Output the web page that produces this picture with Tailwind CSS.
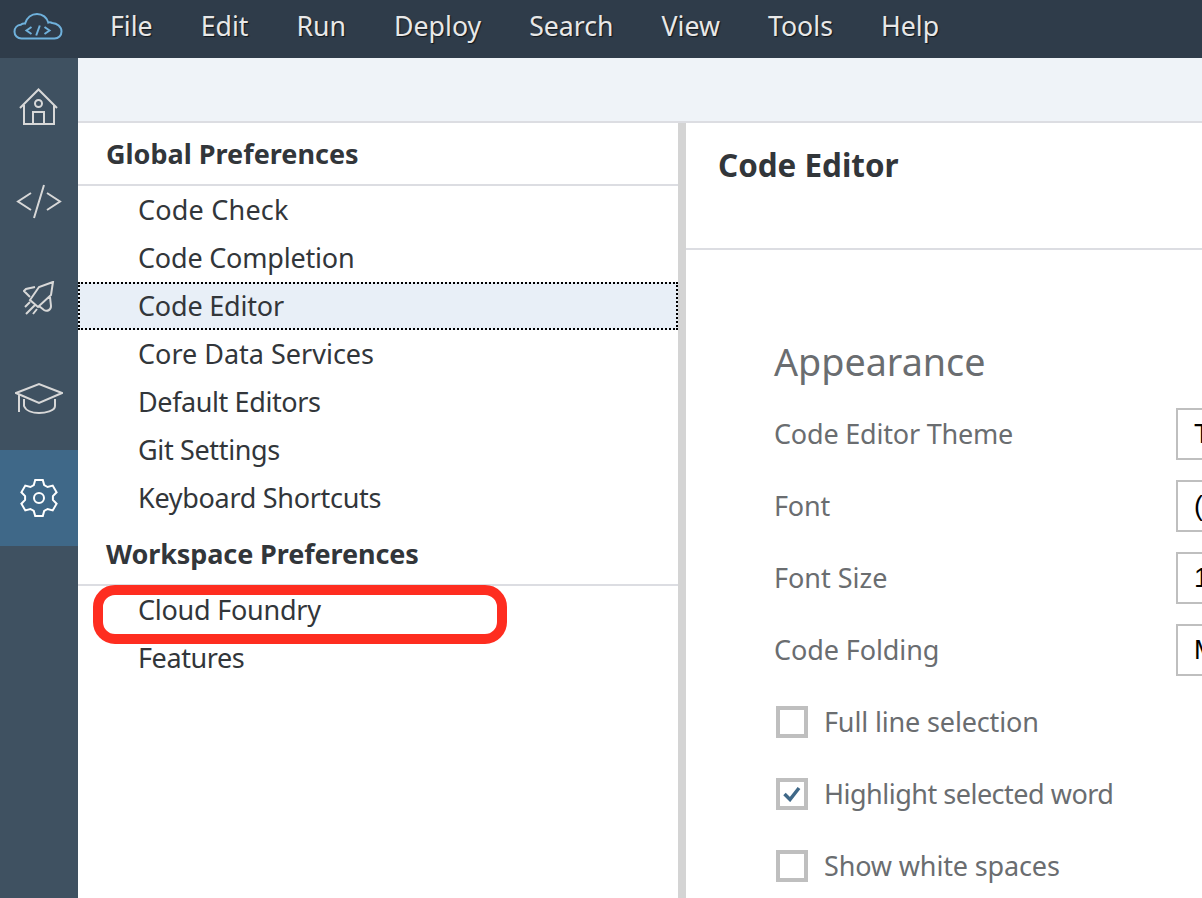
<!doctype html>
<html>
<head>
<meta charset="utf-8">
<script src="https://cdn.jsdelivr.net/npm/@tailwindcss/browser@4"></script>
</head>
<body class="overflow-hidden">
<div class="relative flex h-[898px] w-[1202px] flex-col overflow-hidden bg-white font-['Noto_Sans',sans-serif] text-[#32363a]">
  <header class="flex h-[58px] shrink-0 items-center bg-[#2f3c4a]">
    <div class="flex w-[78px] shrink-0 justify-center">
      <svg width="50" height="28" viewBox="0 0 50 28" fill="none" stroke="#6fb1dc" stroke-width="2" class="mb-[6px] mr-[2px]">
        <path d="M11 26.5H8.5C4.5 26.5 1.5 23.5 1.5 19.7C1.5 16 4.2 13.2 7.8 12.8C9 11.8 10.5 11.4 12 11.6C13.8 5.8 18.5 2 24 2C29.5 2 34 5.5 35.3 10.6C36.5 10.2 38 10.4 39.2 11C44 11.2 48.5 14.6 48.5 19.5C48.5 23.5 45.5 26.5 41.5 26.5Z"/>
        <path d="M18.5 15L13.5 18.5L18.5 22M31.5 15L36.5 18.5L31.5 22M26.8 13.5L23.2 23.5"/>
      </svg>
    </div>
    <nav class="flex items-center gap-[48px] pb-[6px] pl-[32px] text-[26.7px] text-[#e8e8e8] [text-shadow:1px_1px_1px_#10161c]">
      <span>File</span><span>Edit</span><span>Run</span><span>Deploy</span><span>Search</span><span>View</span><span>Tools</span><span>Help</span>
    </nav>
  </header>
  <div class="flex min-h-0 flex-1">
    <aside class="flex w-[78px] shrink-0 flex-col bg-[#3f5161]">
      <div class="flex h-[96px] items-center justify-center">
        <svg width="40" height="40" viewBox="0 0 40 40" fill="none" stroke="#d8d8d8" stroke-width="2">
          <path d="M1 22L19.5 3.5L38 22M5 19V38H35V19M14 38V26H25V38"/><circle cx="19.5" cy="17.5" r="3.5"/>
        </svg>
      </div>
      <div class="flex h-[96px] items-center justify-center">
        <svg width="46" height="36" viewBox="0 0 46 36" fill="none" stroke="#d8d8d8" stroke-width="2">
          <path d="M15 9L2 17.5L15 26M31 9L44 17.5L31 26M28 1L18 34"/>
        </svg>
      </div>
      <div class="flex h-[96px] items-center justify-center">
        <svg width="32" height="34" viewBox="0 0 32 34" fill="none" stroke="#d8d8d8" stroke-width="2">
          <path d="M30 1L16 6L7 19L15 26L28 14ZM12 6L3 8L1 10L7 16M27 16L28 25C28 29 24 31 21 29L16 25M2 26L7 21M3 33L12 24M10 33L14 28"/>
        </svg>
      </div>
      <div class="flex h-[104px] items-center justify-center">
        <svg width="48" height="32" viewBox="0 0 48 32" fill="none" stroke="#d8d8d8" stroke-width="2">
          <path d="M1 11L24 2L47 11L24 21ZM4 13V30M9 17V24C11 29 18 31 24 31C30 31 40 29 40 24V17"/>
        </svg>
      </div>
      <div class="flex h-[96px] items-center justify-center bg-[#3f6888]">
        <svg width="40" height="40" viewBox="0 0 40 40" fill="none" stroke="#ffffff" stroke-width="2">
          <path d="M16.2 1.9H23.8L25.2 7L28.6 9L33.7 7.6L37.6 14.3L33.9 18.1V21.9L37.6 25.7L33.7 32.4L28.6 31L25.2 33L23.8 38.1H16.2L14.8 33L11.4 31L6.3 32.4L2.4 25.7L6.1 21.9V18.1L2.4 14.3L6.3 7.6L11.4 9L14.8 7Z"/><circle cx="20" cy="20" r="5"/>
        </svg>
      </div>
    </aside>
    <main class="flex min-w-0 flex-1 flex-col">
      <div class="h-[65px] shrink-0 border-b-2 border-[#dcdde2] bg-[#eff3f8]"></div>
      <div class="flex min-h-0 flex-1">
        <section class="w-[600px] shrink-0 text-[27px]">
          <h2 class="flex h-[63px] items-center border-b-2 border-[#dcdde2] pt-[2px] pl-[28px] font-bold">Global Preferences</h2>
          <ul>
            <li class="flex h-[48px] items-center pl-[60px] tracking-[0.2px]">Code Check</li>
            <li class="flex h-[48px] items-center pl-[60px] tracking-[-0.2px]">Code Completion</li>
            <li class="flex h-[48px] items-center border-2 border-dotted border-black bg-[#e8eff7] pl-[58px] tracking-[-0.2px]">Code Editor</li>
            <li class="flex h-[48px] items-center pl-[60px]">Core Data Services</li>
            <li class="flex h-[48px] items-center pl-[60px] tracking-[-0.4px]">Default Editors</li>
            <li class="flex h-[48px] items-center pl-[60px] tracking-[-0.35px]">Git Settings</li>
            <li class="flex h-[48px] items-center pl-[60px] tracking-[-0.3px]">Keyboard Shortcuts</li>
          </ul>
          <h2 class="flex h-[64px] items-center border-b-2 border-[#dcdde2] pt-[2px] pl-[28px] font-bold tracking-[-0.1px]">Workspace Preferences</h2>
          <ul>
            <li class="flex h-[48px] items-center pl-[60px] tracking-[-0.25px]">Cloud Foundry</li>
            <li class="flex h-[48px] items-center pl-[60px] tracking-[-0.4px]">Features</li>
          </ul>
        </section>
        <div class="w-[8px] shrink-0 bg-[#d4d4d4]"></div>
        <section class="min-w-0 flex-1">
          <h1 class="flex h-[127px] items-start border-b-2 border-[#dcdde2] pl-[32px] pt-[18px] text-[31.4px] font-bold">Code Editor</h1>
          <div class="pl-[88px] text-[27px] text-[#6a6d70]">
            <h3 class="flex h-[137px] items-end text-[37.7px] leading-[50px]">Appearance</h3>
            <div class="mt-[21px] flex flex-col gap-[20px]">
              <div class="flex h-[52px] items-center"><span class="w-[402px] shrink-0 tracking-[-0.2px]">Code Editor Theme</span><span class="flex h-[52px] w-[80px] shrink-0 items-center border-2 border-[#bfbfbf] pl-[16px] font-['Liberation_Sans',sans-serif] text-black">T</span></div>
              <div class="flex h-[52px] items-center"><span class="w-[402px] shrink-0 tracking-[-0.2px]">Font</span><span class="flex h-[52px] w-[80px] shrink-0 items-center border-2 border-[#bfbfbf] pl-[16px] font-['Liberation_Sans',sans-serif] text-black">(</span></div>
              <div class="flex h-[52px] items-center"><span class="w-[402px] shrink-0">Font Size</span><span class="flex h-[52px] w-[80px] shrink-0 items-center border-2 border-[#bfbfbf] pl-[16px] font-['Liberation_Sans',sans-serif] text-black">1</span></div>
              <div class="flex h-[52px] items-center"><span class="w-[402px] shrink-0 tracking-[-0.1px]">Code Folding</span><span class="flex h-[52px] w-[80px] shrink-0 items-center border-2 border-[#bfbfbf] pl-[16px] font-['Liberation_Sans',sans-serif] text-black">M</span></div>
              <div class="flex h-[52px] items-center pl-[2px] tracking-[-0.15px]"><span class="mr-[16px] h-[32px] w-[32px] shrink-0 border-4 border-[#bfbfbf]"></span>Full line selection</div>
              <div class="flex h-[52px] items-center pl-[2px] tracking-[-0.5px]"><span class="mr-[16px] flex h-[32px] w-[32px] shrink-0 items-center justify-center border-4 border-[#bfbfbf]"><svg width="18" height="16" viewBox="0 0 18 16" fill="none" stroke="#3f6888" stroke-width="3.5"><path d="M1.5 8L7 13.5L16 2"/></svg></span>Highlight selected word</div>
              <div class="flex h-[52px] items-center pl-[2px] tracking-[-0.15px]"><span class="mr-[16px] h-[32px] w-[32px] shrink-0 border-4 border-[#bfbfbf]"></span>Show white spaces</div>
            </div>
          </div>
        </section>
      </div>
    </main>
  </div>
  <div class="absolute left-[93px] top-[585px] h-[59px] w-[414px] rounded-[22px] border-[10px] border-[#fe2d20]"></div>
</div>
</body>
</html>
